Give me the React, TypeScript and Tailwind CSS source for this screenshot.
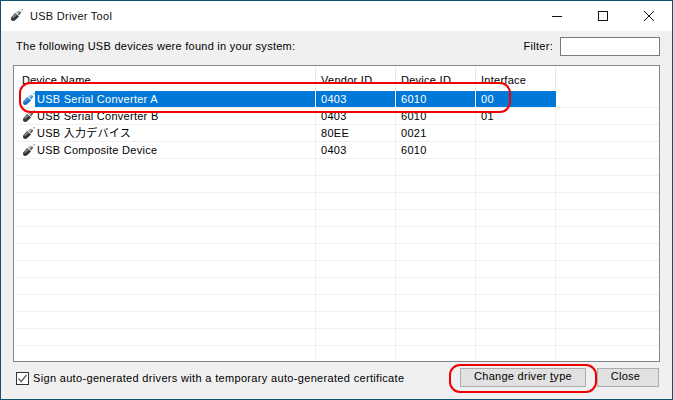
import React from "react";

function UsbIcon({ selected = false }: { selected?: boolean }) {
  const light = selected ? "#4a9ae0" : "#808080";
  const dark = selected ? "#1f6fc0" : "#333333";
  const plug = selected ? "#8fc6ee" : "#a8a8a8";
  return (
    <svg width="12" height="12" viewBox="0 0 12 12" className="shrink-0">
      <path d="M0 8.8 L4 4 L8 7.4 L3.8 11.6 Q1.4 12.4 0.2 11 Z" fill={dark} />
      <path d="M1 8 L4 4.6 L5.8 6 L2.4 9.2 Z" fill={light} />
      <path d="M5 3.6 L8 1.4 L10.4 3.6 L8 6.6 Z" fill={plug} />
      <path d="M6.8 5.4 L9 2.6 L10.4 3.6 L8 6.6 Z" fill={dark} opacity="0.6" />
      <rect x="10.5" y="0" width="1.5" height="1.5" fill={selected ? "#7fe08a" : "#a0a0a0"} />
    </svg>
  );
}

type Row = { name: string; vendor: string; device: string; iface: string };

const rows: Row[] = [
  { name: "USB Serial Converter A", vendor: "0403", device: "6010", iface: "00" },
  { name: "USB Serial Converter B", vendor: "0403", device: "6010", iface: "01" },
  { name: "USB 入力デバイス", vendor: "80EE", device: "0021", iface: "" },
  { name: "USB Composite Device", vendor: "0403", device: "6010", iface: "" },
];

const empties = Array.from({ length: 12 }, (_, i) => i);

export default function App() {
  return (
    <div
      className="relative flex h-[400px] w-[673px] flex-col overflow-hidden border border-[#0f5272] bg-[#f0f0f0] text-[11px] tracking-[0.27px] text-black"
      style={{ fontFamily: '"Liberation Sans", "Noto Sans CJK JP", sans-serif' }}
    >
      {/* Title bar */}
      <div className="flex h-[30px] shrink-0 items-center bg-white">
        <div className="ml-[10px] mr-[7px] flex w-[12px] -translate-y-[1px] justify-center">
          <UsbIcon />
        </div>
        <span className="text-[#111]">USB Driver Tool</span>
        <div className="ml-auto flex h-full">
          <div className="flex w-[46px] items-center justify-center">
            <svg width="10" height="10" viewBox="0 0 10 10"><path d="M0 5.5H10" stroke="#111" strokeWidth="1" /></svg>
          </div>
          <div className="flex w-[46px] items-center justify-center">
            <svg width="10" height="10" viewBox="0 0 10 10"><rect x="0.5" y="0.5" width="9" height="9" fill="none" stroke="#111" strokeWidth="1" /></svg>
          </div>
          <div className="flex w-[46px] items-center justify-center">
            <svg width="10" height="10" viewBox="0 0 10 10"><path d="M0 0L10 10M10 0L0 10" stroke="#111" strokeWidth="1" /></svg>
          </div>
        </div>
      </div>

      {/* Toolbar row */}
      <div className="flex h-[34px] shrink-0 items-start pl-[15px] pr-[12px] pt-[6px] leading-[18px]">
        <span>The following USB devices were found in your system:</span>
        <span className="ml-auto mr-[7px]">Filter:</span>
        <div className="h-[19px] w-[100px] border border-[#7a7a7a] bg-white" />
      </div>

      {/* Table */}
      <div className="mx-[12px] flex h-[297px] shrink-0 flex-col overflow-hidden border border-[#828790] bg-white pl-[1px]">
        <div className="flex h-[25px] shrink-0 pt-[1px]">
          <div className="flex w-[301px] items-end border-r border-[#e8e8e8] pb-[3px] pl-[7px]">Device Name</div>
          <div className="flex w-[80px] items-end border-r border-[#e8e8e8] pb-[3px] pl-[5px]">Vendor ID</div>
          <div className="flex w-[80px] items-end border-r border-[#e8e8e8] pb-[3px] pl-[5px]">Device ID</div>
          <div className="flex w-[80px] items-end border-r border-[#e8e8e8] pb-[3px] pl-[5px]">Interface</div>
        </div>
        {rows.map((r, i) => {
          const sel = i === 0;
          const cell = sel ? "border-r border-white bg-[#0078d7] text-white" : "border-r border-[#f0f0f0]";
          return (
            <div key={r.name} className="flex h-[17px] shrink-0 border-b border-[#f0f0f0] leading-[16px]">
              <div className={`flex w-[301px] items-center border-r ${sel ? "border-white" : "border-[#f0f0f0]"}`}>
                <div className="flex w-[20px] shrink-0 justify-end">
                  <UsbIcon selected={sel} />
                </div>
                <div className={`h-full flex-1 pl-[2px] ${sel ? "bg-[#0078d7] text-white" : ""}`}>{r.name}</div>
              </div>
              <div className={`w-[80px] pl-[5px] ${cell}`}>{r.vendor}</div>
              <div className={`w-[80px] pl-[5px] ${cell}`}>{r.device}</div>
              <div className={`w-[80px] pl-[5px] ${sel ? "bg-[#0078d7] text-white" : "border-r border-[#f0f0f0]"}`}>{r.iface}</div>
            </div>
          );
        })}
        {empties.map((i) => (
          <div key={i} className="flex h-[17px] shrink-0 border-b border-[#f0f0f0]">
            <div className="w-[301px] border-r border-[#f0f0f0]" />
            <div className="w-[80px] border-r border-[#f0f0f0]" />
            <div className="w-[80px] border-r border-[#f0f0f0]" />
            <div className="w-[80px] border-r border-[#f0f0f0]" />
          </div>
        ))}
      </div>

      {/* Footer */}
      <div className="flex flex-1 items-start pl-[15px] pr-[13px] pt-[6px]">
        <div className="mr-[4px] mt-[4px] flex h-[13px] w-[13px] items-center justify-center border border-[#333] bg-white">
          <svg width="11" height="11" viewBox="0 0 11 11"><path d="M1.5 5.5L4.2 8.5L9.5 2" fill="none" stroke="#555" strokeWidth="1.2" /></svg>
        </div>
        <span className="mt-[3px] leading-[15px] tracking-[0.33px]">Sign auto-generated drivers with a temporary auto-generated certificate</span>
        <button className="ml-auto h-[19px] w-[126px] border border-[#adadad] bg-[#e1e1e1] pb-[2px] leading-[15px]">
          Change driver <span className="underline">t</span>ype
        </button>
        <button className="ml-[11px] h-[19px] w-[62px] border border-[#adadad] bg-[#e1e1e1] pb-[2px] pr-[5px] leading-[15px]">Close</button>
      </div>

      {/* Red annotation outlines */}
      <div className="pointer-events-none absolute left-[18px] top-[81px] h-[31px] w-[492px] rounded-[11px] border-[2px] border-[#f00000]" />
      <div className="pointer-events-none absolute left-[448px] top-[363px] h-[29px] w-[148px] rounded-[11px] border-[2px] border-[#f00000]" />
    </div>
  );
}
